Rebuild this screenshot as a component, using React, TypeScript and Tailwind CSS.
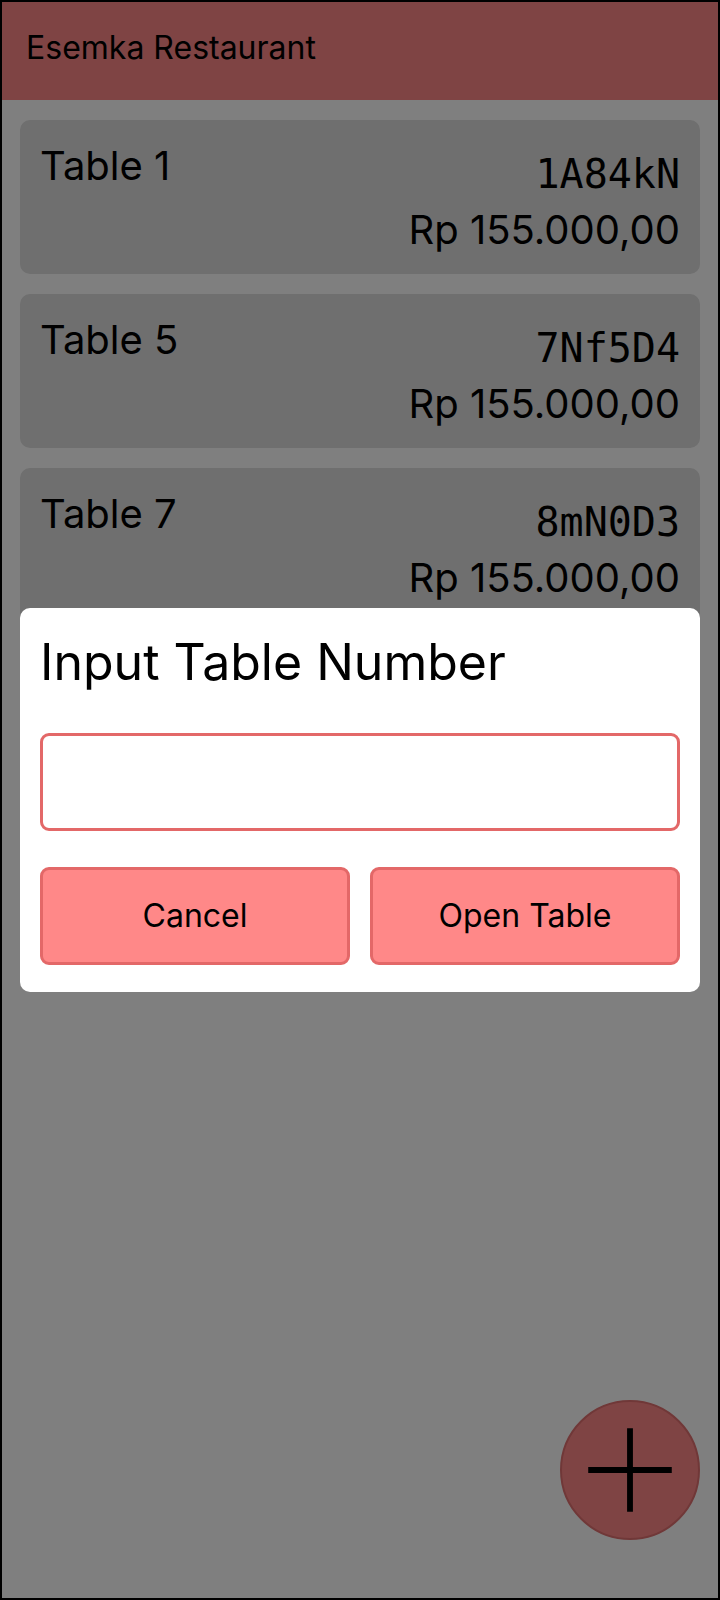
import { useState } from 'react';

type OpenTable = {
  name: string;
  code: string;
  total: string;
};

const tables: OpenTable[] = [
  { name: 'Table 1', code: '1A84kN', total: 'Rp 155.000,00' },
  { name: 'Table 5', code: '7Nf5D4', total: 'Rp 155.000,00' },
  { name: 'Table 7', code: '8mN0D3', total: 'Rp 155.000,00' },
];

const sans = "font-['Inter','Noto_Sans',sans-serif]";

function TableCard({ table }: { table: OpenTable }) {
  return (
    <div className="flex h-[154px] justify-between rounded-[10px] bg-[#dedede] px-5 pt-[22px]">
      <span className="text-[40px] leading-[48px] text-black">{table.name}</span>
      <div className="flex flex-col items-end">
        <span className="mt-2 font-['DejaVu_Sans_Mono',monospace] text-[40px] leading-[48px] text-black">
          {table.code}
        </span>
        <span className="mt-2 text-[40px] leading-[48px] text-black">{table.total}</span>
      </div>
    </div>
  );
}

export default function App() {
  const [tableNumber, setTableNumber] = useState('');
  const [dialogOpen, setDialogOpen] = useState(true);

  return (
    <div className={`relative h-[1600px] w-[720px] overflow-hidden border-2 border-black bg-white ${sans}`}>
      <header className="h-[98px] bg-[#ff8888] pl-6 pt-[26px]">
        <h1 className="text-[32px] leading-[40px] text-black">Esemka Restaurant</h1>
      </header>

      <main className="flex flex-col gap-5 px-[18px] pt-5">
        {tables.map(t => (
          <TableCard key={t.code} table={t} />
        ))}
      </main>

      <button
        className="absolute bottom-[58px] right-[18px] flex h-[140px] w-[140px] items-center justify-center rounded-full border-2 border-[#e07070] bg-[#ff8888]"
        onClick={() => setDialogOpen(true)}
      >
        <svg width="140" height="140" viewBox="0 0 140 140">
          <path d="M70 27V113M27 70H113" stroke="#000" strokeWidth="6" />
        </svg>
      </button>

      {dialogOpen && (
        <div className="absolute inset-0 flex items-center bg-black/50 px-[18px]">
          <div className="w-full rounded-[10px] bg-white px-5 pb-[27px] pt-[25px]">
            <h2 className="text-[50px] leading-[58px] text-black">Input Table Number</h2>
            <input
              value={tableNumber}
              onChange={e => setTableNumber(e.target.value)}
              className="mt-[42px] block h-[98px] w-full rounded-[9px] border-[3px] border-[#e36868] bg-white px-4 text-[32px] outline-none"
            />
            <div className="mt-9 grid grid-cols-2 gap-5">
              <button
                className="flex h-[98px] items-center justify-center rounded-[9px] border-[3px] border-[#e36868] bg-[#ff8888] text-[32px] text-black"
                onClick={() => setDialogOpen(false)}
              >
                Cancel
              </button>
              <button className="flex h-[98px] items-center justify-center rounded-[9px] border-[3px] border-[#e36868] bg-[#ff8888] text-[32px] text-black">
                Open Table
              </button>
            </div>
          </div>
        </div>
      )}
    </div>
  );
}
